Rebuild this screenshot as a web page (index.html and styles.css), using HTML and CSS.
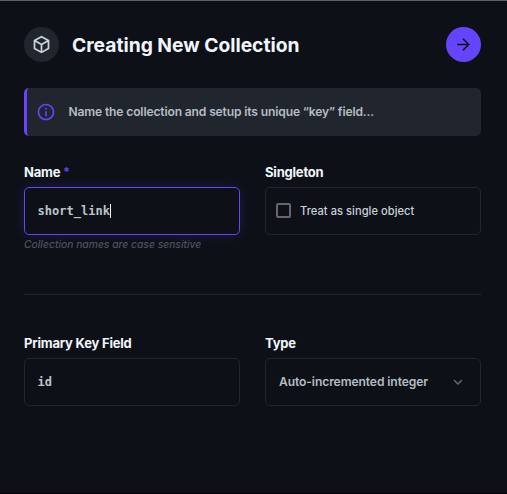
FILE: index.html
```html
<!DOCTYPE html>
<html lang="en">
<head>
<meta charset="utf-8">
<title>Creating New Collection</title>
<link rel="stylesheet" href="styles.css">
</head>
<body>
<main class="drawer">
  <header class="header">
    <span class="badge">
      <svg width="21" height="21" viewBox="0 0 24 24" fill="currentColor"><path d="M21 16.5c0 .38-.21.71-.53.88l-7.9 4.44c-.16.12-.36.18-.57.18s-.41-.06-.57-.18l-7.9-4.44A.991.991 0 0 1 3 16.5v-9c0-.38.21-.71.53-.88l7.9-4.44c.16-.12.36-.18.57-.18s.41.06.57.18l7.9 4.44c.32.17.53.5.53.88v9zM12 4.15 6.04 7.5 12 10.85l5.96-3.35L12 4.15zM5 15.91l6 3.38v-6.71L5 9.21v6.7zm14 0v-6.7l-6 3.37v6.71l6-3.38z"/></svg>
    </span>
    <h1 class="title">Creating New Collection</h1>
    <button class="next" aria-label="Next">
      <svg width="19" height="19" viewBox="0 0 24 24" fill="currentColor"><path d="m12 4-1.41 1.41L16.17 11H4v2h12.17l-5.58 5.59L12 20l8-8z"/></svg>
    </button>
  </header>
  <div class="notice">
    <svg width="20" height="20" viewBox="0 0 24 24" fill="currentColor"><path d="M11 7h2v2h-2zm0 4h2v6h-2zm1-9C6.48 2 2 6.48 2 12s4.48 10 10 10 10-4.48 10-10S17.52 2 12 2zm0 18c-4.41 0-8-3.59-8-8s3.59-8 8-8 8 3.59 8 8-3.59 8-8 8z"/></svg>
    <span class="notice-text">Name the collection and setup its unique “key” field...</span>
  </div>
  <div class="row">
    <div class="field">
      <div class="label">Name <span class="required">*</span></div>
      <div class="input mono focused">short_link<span class="caret"></span></div>
      <div class="hint">Collection names are case sensitive</div>
    </div>
    <div class="field">
      <div class="label">Singleton</div>
      <div class="input toggle"><span class="checkbox"></span><span class="toggle-text">Treat as single object</span></div>
    </div>
  </div>
  <hr class="divider">
  <div class="row">
    <div class="field">
      <div class="label">Primary Key Field</div>
      <div class="input mono">id</div>
    </div>
    <div class="field">
      <div class="label">Type</div>
      <div class="input select"><span class="select-text">Auto-incremented integer</span>
        <svg width="18" height="18" viewBox="0 0 24 24" fill="currentColor"><path d="M7.41 8.59 12 13.17l4.59-4.58L18 10l-6 6-6-6z"/></svg>
      </div>
    </div>
  </div>
</main>
</body>
</html>
```
FILE: styles.css
```css
* { box-sizing: border-box; }
body {
  margin: 0;
  background: #0d1117;
  color: #c9d1d9;
  font-family: Inter, "Liberation Sans", sans-serif;
}
.drawer {
  height: 494px;
  padding: 26px 26px 0 24px;
  border-top: 1px solid #5d5f60;
  border-bottom: 1px solid #06020c;
  overflow: hidden;
}
.header { display: flex; align-items: center; height: 35px; }
.badge, .next {
  display: flex;
  align-items: center;
  justify-content: center;
  width: 35px;
  height: 35px;
  border-radius: 50%;
}
.badge { background: #21262e; color: #c9d1d9; }
.title {
  margin: 0 auto 0 13px;
  color: #f0f6fc;
  font-size: 19.3px;
  font-weight: 700;
  letter-spacing: -0.02px;
  line-height: 28px;
  white-space: nowrap;
}
.next { padding: 0; border: 0; background: #6644ff; color: #0d1117; }
.notice {
  display: flex;
  align-items: center;
  height: 48px;
  margin-top: 26px;
  padding-left: 9px;
  border-left: 3px solid #6644ff;
  border-radius: 5px;
  background: #21262e;
  color: #6644ff;
}
.notice-text {
  margin-left: 12.5px;
  margin-top: -1px;
  color: #b7bdc5;
  font-size: 12.1px;
  font-weight: 600;
  letter-spacing: -0.15px;
}
.row { display: grid; grid-template-columns: 216px 216px; column-gap: 25px; }
.notice + .row { height: 158px; padding-top: 27px; }
.label {
  height: 24px;
  color: #f0f6fc;
  font-size: 13px;
  font-weight: 700;
  letter-spacing: -0.2px;
  line-height: 18px;
}
.required { color: #6644ff; font-size: 12px; font-weight: 600; vertical-align: 1px; line-height: 1; }
.input {
  display: flex;
  align-items: center;
  height: 48px;
  padding: 0 13px;
  border: 1px solid #21262e;
  border-radius: 5px;
  font-size: 12.1px;
  font-weight: 600;
  letter-spacing: -0.1px;
  white-space: nowrap;
}
.mono {
  padding-left: 12.5px;
  color: #bdc4cc;
  font-family: "DejaVu Sans Mono", monospace;
  font-size: 12px;
  font-weight: 700;
  letter-spacing: 0.03px;
}
.focused { border-color: #6644ff; box-shadow: 0 0 14px -3px rgba(102, 68, 255, 0.3); }
.caret { width: 1px; height: 14px; background: #f0f6fc; }
.hint {
  margin-top: 3px;
  color: #4d525b;
  font-size: 10.3px;
  font-style: italic;
  font-weight: 500;
  line-height: 13px;
  white-space: nowrap;
}
.toggle { padding-left: 10px; }
.checkbox { width: 15px; height: 15px; margin-top: -2px; border: 2px solid #666672; border-radius: 2px; }
.toggle-text { margin-left: 9px; margin-top: -1px; font-size: 11.1px; font-weight: 500; letter-spacing: 0.05px; }
.divider { height: 1px; margin: 0 0 39px; border: 0; background: #21262e; }
.select { justify-content: space-between; color: #b7bdc5; }
.select-text { margin-top: -1px; }
.select svg { color: #666672; }
```
